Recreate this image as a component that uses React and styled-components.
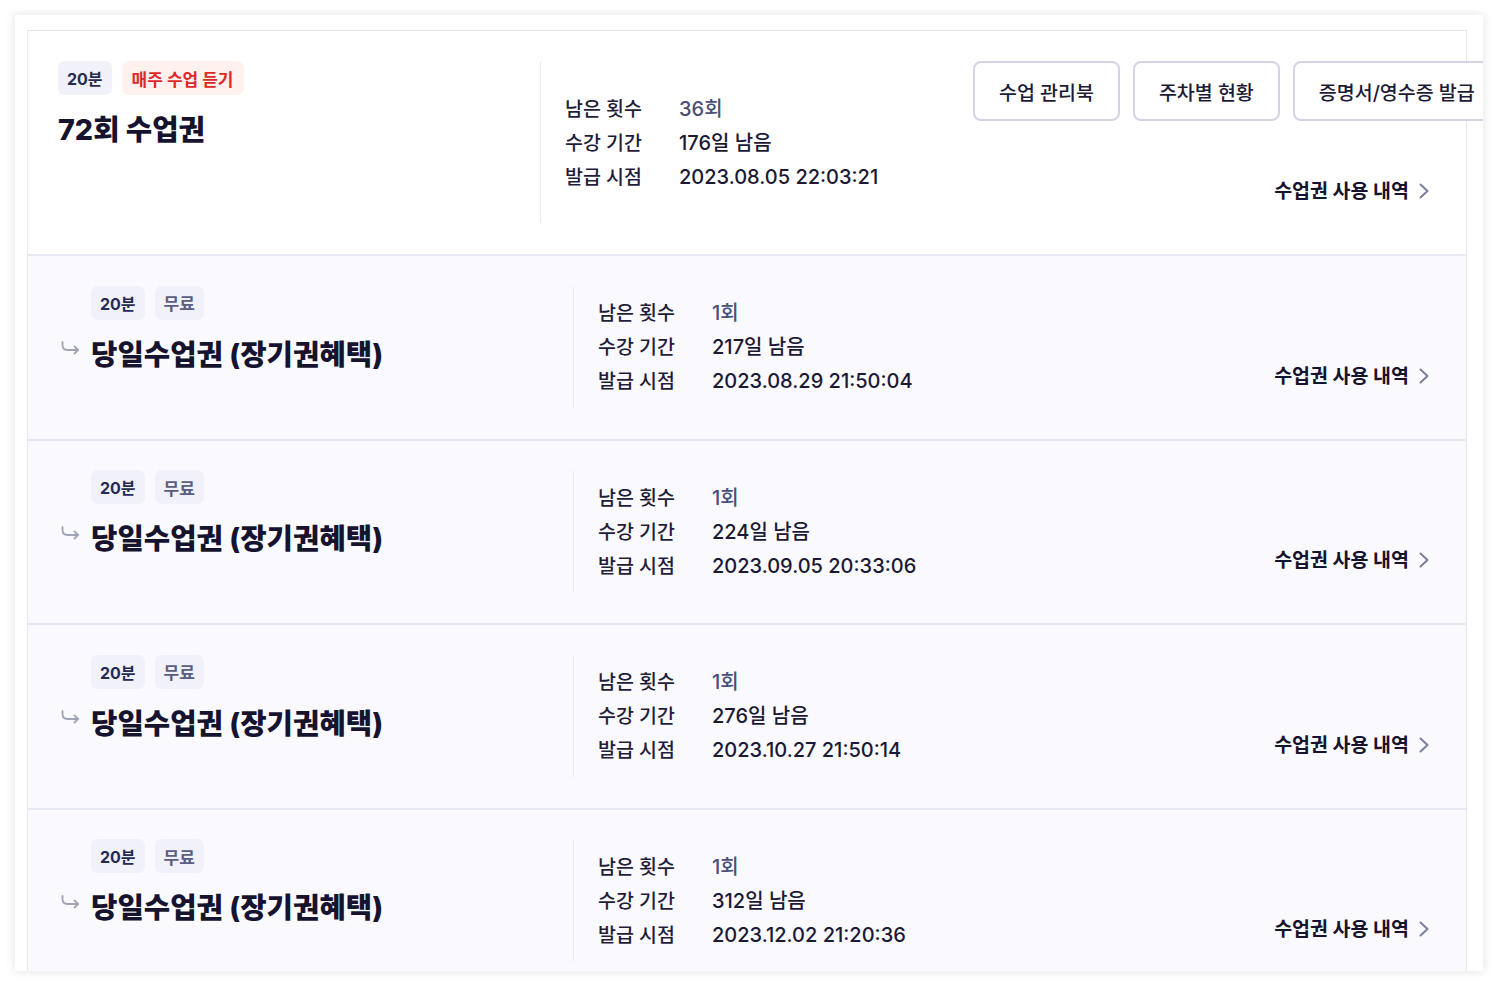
import styled, { createGlobalStyle } from 'styled-components';

//Page base
const GlobalStyle = createGlobalStyle`
  * { box-sizing: border-box; }
  html, body {
    margin: 0;
    background: #fff;
  }
  body {
    font-family: Inter, "Noto Sans CJK KR", sans-serif;
    color: #1b1935;
  }
`;

//Outer shadow card
const Page = styled.div`
  padding: 15px;
  height: 986px;
`;
const Card = styled.div`
  height: 956px;
  background: #fff;
  box-shadow: 0 0 10px rgba(20, 20, 40, 0.13);
  padding: 15px 16px 0 12px;
  overflow: hidden;
`;

//List of tickets
const List = styled.div`
  border: 1px solid #e4e6f2;
  border-bottom: none;
`;
const Row = styled.div`
  display: flex;
  background: ${(p) => (p.$sub ? '#f9f9fe' : '#fff')};
  border-top: ${(p) => (p.$first ? 'none' : '2px solid #e6e8f4')};
  padding: ${(p) => (p.$sub ? '29.5px 36px 31px 63px' : '30px 36px 31px 30px')};
`;

//Left column - tags + title
const Main = styled.div`
  flex: 0 0 482px;
  display: flex;
  flex-direction: column;
  gap: 15px;
`;
const Tags = styled.div`
  display: flex;
  gap: 10px;
`;
const Tag = styled.span`
  height: 34px;
  display: inline-flex;
  align-items: center;
  padding: 0 ${(p) => (p.$red ? '10px' : '9px')};
  border-radius: 7px;
  font-size: ${(p) => (p.$red || p.$muted ? '17px' : '16px')};
  font-weight: ${(p) => (p.$muted ? 600 : 700)};
  background: ${(p) => (p.$red ? '#fff1ee' : '#f0f1f9')};
  color: ${(p) => (p.$red ? '#dc2a2a' : p.$muted ? '#5b5e82' : '#272a52')};
`;
const TitleRow = styled.div`
  display: flex;
  align-items: center;
  margin-left: ${(p) => (p.$sub ? '-30px' : '0')};
`;
const Hook = styled.svg`
  flex: 0 0 auto;
  width: 19px;
  height: 14px;
  margin-right: 11px;
  margin-bottom: 13px;
`;
const Title = styled.h2`
  margin: 0;
  font-size: 28.7px;
  line-height: 40px;
  font-weight: 800;
  color: #16132f;
`;

//Middle column - info table
const Info = styled.div`
  flex: 1;
  min-width: 0;
  min-height: ${(p) => (p.$tall ? '161px' : '121px')};
  border-left: 1px solid #e6e8f4;
  padding-left: 24px;
  display: grid;
  grid-template-columns: 114px auto;
  align-content: center;
  margin-top: 1px;
`;
const Label = styled.span`
  font-size: 19.5px;
  line-height: 34px;
  font-weight: 500;
  color: #1f1d3a;
`;
const Value = styled.span`
  font-size: 20px;
  line-height: 34px;
  font-weight: 500;
  color: ${(p) => (p.$soft ? '#4b4f78' : '#1b1935')};
`;

//Right column - buttons + history link
const Side = styled.div`
  flex: 0 0 457px;
  min-width: 0;
  display: flex;
  flex-direction: column;
  justify-content: ${(p) => (p.$tall ? 'space-between' : 'flex-end')};
  padding-bottom: 20px;
`;
const Buttons = styled.div`
  display: flex;
  gap: 13px;
  flex-wrap: nowrap;
`;
const Button = styled.button`
  flex: 0 0 auto;
  height: 60px;
  padding: 0 24px;
  background: #fff;
  border: 2px solid #d2d4e6;
  border-radius: 8px;
  font-family: inherit;
  font-size: 19.5px;
  font-weight: 500;
  color: #1d1b37;
  white-space: nowrap;
`;
const HistoryLink = styled.a`
  align-self: flex-end;
  display: inline-flex;
  align-items: center;
  gap: 9px;
  font-size: 19.5px;
  line-height: 24px;
  font-weight: 700;
  color: #16132f;
  text-decoration: none;
`;

const HookIcon = () => (
  <Hook viewBox="0 0 19 14" fill="none" stroke="#a2a4b6" strokeWidth="1.8" strokeLinecap="round" strokeLinejoin="round">
    <path d="M1.5 1 V4 Q1.5 9 6.5 9 H17" />
    <path d="M13.5 5.5 L17 9 L13.5 12.5" />
  </Hook>
);

const Chevron = () => (
  <svg width="12" height="16" viewBox="0 0 12 16" fill="none">
    <path d="M2.5 1.5 L9.5 8 L2.5 14.5" stroke="#7c7f9c" strokeWidth="2" strokeLinecap="round" strokeLinejoin="round" />
  </svg>
);

const bonusTickets = [
  { left: '217일 남음', issued: '2023.08.29 21:50:04' },
  { left: '224일 남음', issued: '2023.09.05 20:33:06' },
  { left: '276일 남음', issued: '2023.10.27 21:50:14' },
  { left: '312일 남음', issued: '2023.12.02 21:20:36' },
];

export default function App() {
  return (
    <Page>
      <GlobalStyle />
      <Card>
        <List>
          <Row $first>
            <Main>
              <Tags>
                <Tag>20분</Tag>
                <Tag $red>매주 수업 듣기</Tag>
              </Tags>
              <TitleRow>
                <Title>72회 수업권</Title>
              </TitleRow>
            </Main>
            <Info $tall>
              <Label>남은 횟수</Label>
              <Value $soft>36회</Value>
              <Label>수강 기간</Label>
              <Value>176일 남음</Value>
              <Label>발급 시점</Label>
              <Value>2023.08.05 22:03:21</Value>
            </Info>
            <Side $tall>
              <Buttons>
                <Button>수업 관리북</Button>
                <Button>주차별 현황</Button>
                <Button>증명서/영수증 발급</Button>
              </Buttons>
              <HistoryLink href="#">
                수업권 사용 내역
                <Chevron />
              </HistoryLink>
            </Side>
          </Row>

          {bonusTickets.map((t) => (
            <Row $sub key={t.issued}>
              <Main>
                <Tags>
                  <Tag>20분</Tag>
                  <Tag $muted>무료</Tag>
                </Tags>
                <TitleRow $sub>
                  <HookIcon />
                  <Title>당일수업권 (장기권혜택)</Title>
                </TitleRow>
              </Main>
              <Info>
                <Label>남은 횟수</Label>
                <Value $soft>1회</Value>
                <Label>수강 기간</Label>
                <Value>{t.left}</Value>
                <Label>발급 시점</Label>
                <Value>{t.issued}</Value>
              </Info>
              <Side>
                <HistoryLink href="#">
                  수업권 사용 내역
                  <Chevron />
                </HistoryLink>
              </Side>
            </Row>
          ))}
        </List>
      </Card>
    </Page>
  );
}
